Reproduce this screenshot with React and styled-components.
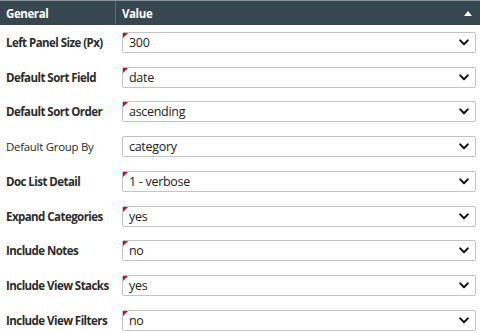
import React from "react";
import styled, { createGlobalStyle } from "styled-components";

const Global = createGlobalStyle`
  html, body { margin: 0; padding: 0; background: #fff; }
  body { font-family: "Open Sans", "Noto Sans", sans-serif; overflow: hidden; }
`;

const Grid = styled.div`
  width: 480px;
  height: 333px;
  overflow: hidden;
  background: #fff;
`;

const Header = styled.div`
  display: grid;
  grid-template-columns: 115px 1fr;
  height: 25px;
  background: #37474f;
  border-top: 1px solid #8a9399;
  box-sizing: border-box;
  color: #fff;
  font-weight: 700;
  font-size: 11.5px;
  letter-spacing: -0.4px;
`;

const HeadCell = styled.div`
  display: flex;
  align-items: center;
  padding-left: ${(p) => p.$pad}px;
  padding-right: 6px;
  border-left: ${(p) => (p.$divider ? "1px solid #5d6a71" : "none")};
  justify-content: space-between;
`;

const SortArrow = styled.span`
  width: 0;
  height: 0;
  border-left: 4px solid transparent;
  border-right: 4px solid transparent;
  border-bottom: 5px solid #fff;
  margin-right: 2px;
`;

const Row = styled.div`
  display: grid;
  grid-template-columns: 122px 1fr;
  align-items: center;
  height: 34.75px;
  padding-right: 4px;
`;

const Label = styled.div`
  padding-left: 6px;
  font-size: 11.5px;
  font-weight: ${(p) => (p.$bold ? 700 : 400)};
  color: #2b2b2b;
  letter-spacing: ${(p) => (p.$bold ? "-0.55px" : "-0.3px")};
  white-space: nowrap;
`;

const Select = styled.div`
  position: relative;
  height: 21px;
  box-sizing: border-box;
  border: 1px solid #c4c4c4;
  border-radius: 2px;
  display: flex;
  align-items: center;
  justify-content: space-between;
  padding: 0 6px 0 6px;
  font-size: 12.5px;
  letter-spacing: -0.3px;
  color: #222;
  background: #fff;
`;

const Dirty = styled.span`
  position: absolute;
  left: 0;
  top: 0;
  width: 0;
  height: 0;
  border-top: 5px solid #c0111f;
  border-right: 5px solid transparent;
`;

const Chevron = () => (
  <svg width="10" height="7" viewBox="0 0 10 7">
    <path d="M1.2 1.4 L5 5.2 L8.8 1.4" fill="none" stroke="#111" strokeWidth="2" strokeLinecap="round" strokeLinejoin="round" />
  </svg>
);

const rows = [
  ["Left Panel Size (Px)", "300", true, true],
  ["Default Sort Field", "date", true, true],
  ["Default Sort Order", "ascending", true, true],
  ["Default Group By", "category", false, false],
  ["Doc List Detail", "1 - verbose", true, true],
  ["Expand Categories", "yes", true, true],
  ["Include Notes", "no", true, true],
  ["Include View Stacks", "yes", true, true],
  ["Include View Filters", "no", true, true],
];

export default function App() {
  return (
    <Grid>
      <Global />
      <Header>
        <HeadCell $pad={6}>General</HeadCell>
        <HeadCell $pad={6} $divider>
          <span>Value</span>
          <SortArrow />
        </HeadCell>
      </Header>
      {rows.map(([label, value, bold, dirty]) => (
        <Row key={label}>
          <Label $bold={bold}>{label}</Label>
          <Select>
            {dirty && <Dirty />}
            <span>{value}</span>
            <Chevron />
          </Select>
        </Row>
      ))}
    </Grid>
  );
}
